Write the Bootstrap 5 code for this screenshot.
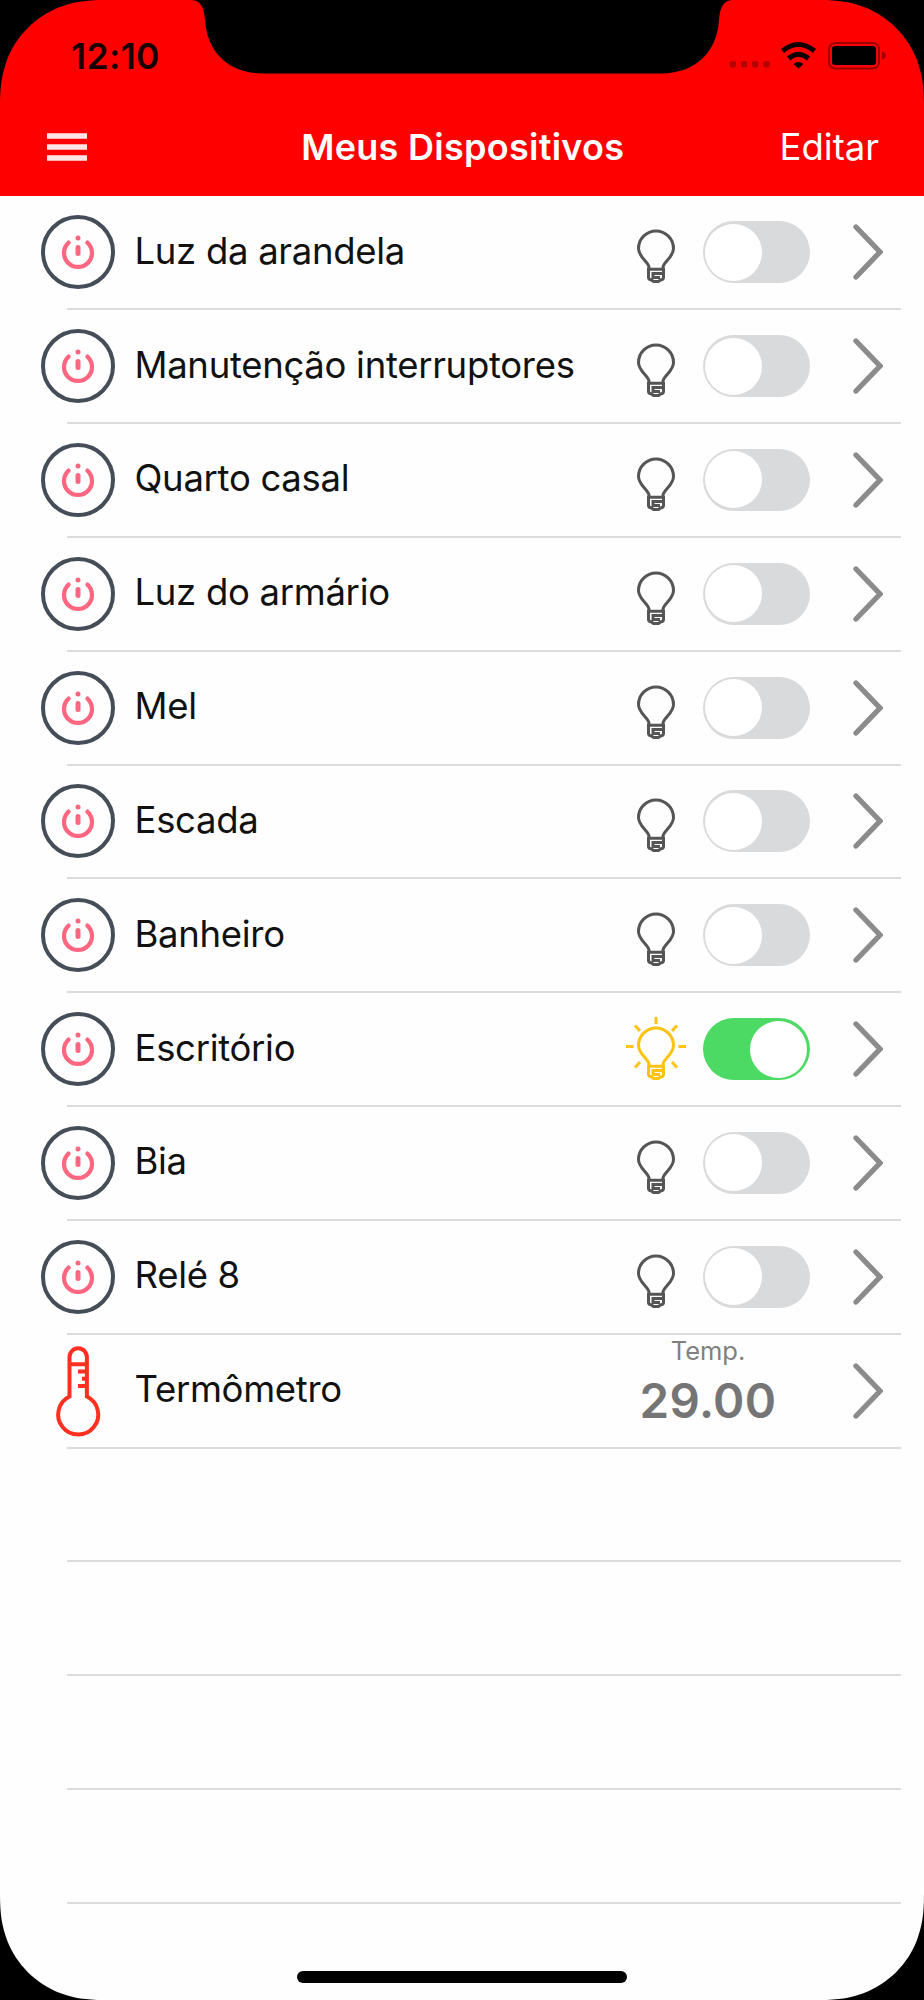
<!DOCTYPE html>
<html lang="pt-BR">
<head>
<meta charset="utf-8">
<meta name="viewport" content="width=device-width, initial-scale=1">
<title>Meus Dispositivos</title>
<link href="https://cdn.jsdelivr.net/npm/bootstrap@5.3.0/dist/css/bootstrap.min.css" rel="stylesheet">
<style>
body{font-family:Inter,"Liberation Sans",sans-serif;background:#000;color:#111}
.phone{width:924px;height:2000px;background:#fefefe;overflow:hidden}
.topbar{height:196.4px;background:#f00}
.status{height:86px;padding:31.5px 38px 0 71px}
.clock{font-size:35.5px;font-weight:600;line-height:50px;color:#180000;letter-spacing:.4px}
.nav-row{height:110px;padding:12px 45px 0 47px;color:#fff;font-size:36.5px}
.title-text{font-weight:600;font-size:36px;line-height:44px;letter-spacing:.28px;padding-left:59px}
.edit{line-height:44px}
.device{height:113.84px;padding:0 41px 2px 41px;background:linear-gradient(#dcdcdc,#dcdcdc) 67px 100%/834px 2px no-repeat}
.device-name{font-size:36.5px;line-height:44px;margin-left:19.5px;padding-bottom:3px;white-space:nowrap;letter-spacing:-.3px}
.bulb{width:60px;height:64px;margin-right:17px;fill:none;stroke:#555;stroke-width:3}
.bulb.lit{stroke:#fcc312}
.rays{display:none}.lit .rays{display:inline}
.toggle{width:107px;height:62px;border-radius:31px;background:#d8dadc;padding:2px;margin-right:43px}
.toggle i{width:57px;height:57px;border-radius:50%;background:#fff}
.toggle.on{background:#4cd964;padding-right:3px}
.temp{width:150px;margin-right:70px;color:#757575;text-align:center;padding-bottom:16px}
.temp-label{font-size:25.5px;line-height:30px;color:#808080}
.temp-value{font-size:47.5px;font-weight:600;line-height:56px;margin-top:7px;letter-spacing:.4px}
.home{width:330px;height:12px;border-radius:6px;background:#000;bottom:17.5px;left:297px}
.bezel{pointer-events:none}
</style>
</head>
<body>
<svg class="d-none">
<symbol id="power" viewBox="0 0 74 74"><circle cx="37" cy="37" r="35" fill="#fefefe" stroke="#454e58" stroke-width="4"/><path d="M27.600 27.600a14 14 0 1 0 18.800 0" fill="none" stroke="#ff6680" stroke-width="4.200" stroke-linecap="round"/><path d="M37 32.500v6" stroke="#ff6680" stroke-width="5" stroke-linecap="round"/><circle cx="37" cy="23" r="2.500" fill="#ff6680"/></symbol>
<symbol id="bulb" viewBox="0 0 60 64"><path d="M23 49v-2C22 41.500 12.500 37 12.500 28.500a17.500 17.500 0 0 1 35 0C47.500 37 38 41.500 37 47V49M22.500 49.200h15v8.300q0 2-3 2.500L32.500 61.500h-5l-2-1.500q-3-.5-3-2.500ZM36 53.500H27V57.500H34"/></symbol>
<symbol id="chev" viewBox="0 0 30 56"><path d="M3 3 27 28 3 53" fill="none" stroke="#8b8b8b" stroke-width="5.300" stroke-linecap="round"/></symbol>
</svg>
<main class="phone position-relative">
<header class="topbar">
<div class="status d-flex justify-content-between">
<span class="clock">12:10</span>
<svg width="156" height="30" viewBox="730 40 156 30" overflow="visible" style="margin-top:8.500px">
<g fill="#b50000"><rect x="729.500" y="61" width="6.500" height="6.500" rx="2"/><rect x="740.800" y="61" width="6.500" height="6.500" rx="2"/><rect x="752" y="61" width="6.500" height="6.500" rx="2"/><rect x="763.200" y="61" width="6.500" height="6.500" rx="2"/></g>
<g fill="none" stroke="#100" stroke-width="5"><path d="M782.500 51Q798.500 38 814.500 51"/><path d="M788.500 58.500Q798.500 50 808.500 58.500"/></g><path d="M793.500 64q5-4 10 0l-5 4.500Z" fill="#100"/>
<rect x="829" y="43" width="50" height="25.500" rx="6" fill="none" stroke="#9c0000" stroke-width="2"/><rect x="832" y="46" width="44" height="19" rx="3"/><path d="M882 51.500q4 1 4 4t-4 4Z" fill="#a00000"/>
</svg>
</div>
<nav class="nav-row d-flex align-items-center position-relative">
<svg width="40" height="30" viewBox="0 0 40 30"><path d="M0 4h40M0 15h40M0 26h40" stroke="#fff" stroke-opacity=".9" stroke-width="5.500"/></svg>
<span class="title-text flex-grow-1 text-center">Meus Dispositivos</span>
<span class="edit">Editar</span>
</nav>
</header>
<ul class="list-unstyled mb-0" id="devices"></ul>
<div class="home position-absolute"></div>
<svg class="bezel position-absolute top-0 start-0" width="924" height="2000" viewBox="0 0 924 2000">
<defs><path id="corner" d="M0 0H104C85 0 74 2 60 7C36 16 16 36 7 60C2 74 0 85 0 106Z"/></defs>
<use href="#corner"/><use href="#corner" transform="matrix(-1 0 0 1 924 0)"/><use href="#corner" transform="matrix(1 0 0 -1 0 2000)"/><use href="#corner" transform="matrix(-1 0 0 -1 924 2000)"/>
<path d="M192 0C200 1 204 6 205 20C207 52 228 73 262 73.500H662C696 73 717 52 719 20C720 6 724 1 732 0Z"/>
</svg>
</main>
<script>
const devices = ["Luz da arandela","Manutenção interruptores","Quarto casal","Luz do armário","Mel","Escada","Banheiro","Escritório","Bia","Relé 8"];
const chevron = '<svg width="30" height="56"><use href="#chev"/></svg>';
const relay = name => {
  const on = name === "Escritório";
  return `<li class="device d-flex align-items-center">
  <svg width="74" height="74"><use href="#power"/></svg>
  <span class="device-name flex-grow-1">${name}</span>
  <svg class="bulb ${on ? "lit" : ""}" viewBox="0 0 60 64"><use href="#bulb"/><path class="rays" d="M30 0v7M0 29.500h7.500M52.500 29.500H60M9 8.500l5 5.500M51 8.500l-5 5.500M9 50.500l5-5.500M51 50.500l-5-5.500"/></svg>
  <span class="toggle d-flex align-items-center ${on ? "on justify-content-end" : ""}"><i></i></span>${chevron}</li>`;
};
const thermometer = `<li class="device d-flex align-items-center">
  <svg width="74" height="96" viewBox="0 0 74 96" fill="none" stroke="#ff3020" stroke-width="4"><path d="M28.500 53.500V14a8.700 8.700 0 0 1 17.400 0V53.500A20 20 0 1 1 28.500 53.500ZM28.500 21.300H46M46 28.500H37M46 35.700H41M46 43H37"/></svg>
  <span class="device-name flex-grow-1">Termômetro</span>
  <div class="temp"><div class="temp-label">Temp.</div><div class="temp-value">29.00</div></div>${chevron}</li>`;
document.getElementById("devices").innerHTML = devices.map(relay).join("") + thermometer + '<li class="device"></li>'.repeat(4);
</script>
<script src="https://cdn.jsdelivr.net/npm/bootstrap@5.3.0/dist/js/bootstrap.bundle.min.js"></script>
</body>
</html>
